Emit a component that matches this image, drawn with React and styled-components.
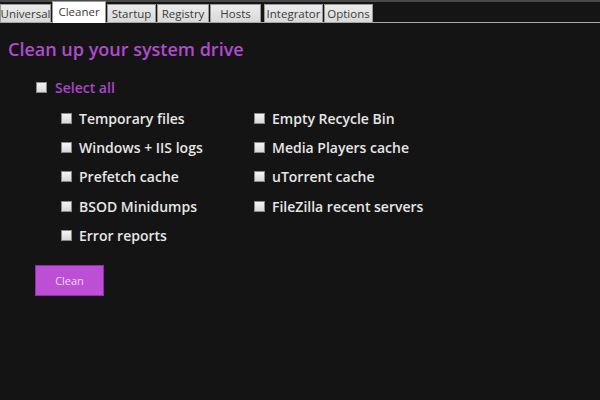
import React, { useState } from 'react';
import styled, { createGlobalStyle } from 'styled-components';

const Global = createGlobalStyle`
  html, body {
    margin: 0;
    padding: 0;
    background: #141414;
  }
  body {
    font-family: "Open Sans", "Noto Sans", sans-serif;
  }
`;

const Window = styled.div`
  width: 600px;
  height: 400px;
  background: #141414;
  overflow: hidden;
`;

const TabStrip = styled.div`
  height: 23px;
  display: flex;
  align-items: flex-end;
  background: #151515;
  border-top: 2px solid #4a4a4a;
  border-bottom: 1px solid #a8a8a8;
  box-sizing: border-box;
`;

const Tab = styled.div`
  height: ${p => (p.$active ? '22px' : '18px')};
  margin-right: ${p => p.$gap || 1}px;
  margin-bottom: ${p => (p.$active ? '-1px' : '0')};
  width: ${p => p.$w}px;
  box-sizing: border-box;
  display: flex;
  align-items: center;
  justify-content: center;
  font-size: 11.5px;
  color: #3a3a3a;
  background: ${p => (p.$active ? '#ffffff' : 'linear-gradient(#ececec, #d9d9d9)')};
  border: 1px solid #9a9a9a;
  border-bottom: none;
  padding-bottom: ${p => (p.$active ? '3px' : '0')};
  cursor: default;
`;

const Content = styled.div`
  padding: 13px 8px 6px;
`;

const Title = styled.h1`
  margin: 0;
  font-size: 18px;
  font-weight: 600;
  color: #b04ccc;
  line-height: 26px;
`;

const SelectAll = styled.label`
  display: flex;
  align-items: center;
  gap: 8px;
  margin: 15px 0 0 28px;
  font-size: 14px;
  font-weight: 600;
  color: #a845c8;
  height: 20px;
`;

const Columns = styled.div`
  display: grid;
  grid-template-columns: 193px 220px;
  margin: 7px 0 0 53px;
`;

const Column = styled.div`
  display: flex;
  flex-direction: column;
`;

const Item = styled.label`
  display: flex;
  align-items: center;
  gap: 7px;
  height: 29.2px;
  font-size: 14px;
  font-weight: 600;
  color: #e6e6e6;
`;

const Box = styled.span`
  width: 11px;
  height: 11px;
  box-sizing: border-box;
  background: ${p => (p.$on ? '#b04ccc' : 'linear-gradient(#f4f4f4, #d8d8d8)')};
  border: 1px solid #888;
  flex: none;
`;

const Button = styled.button`
  margin: 15px 0 0 27px;
  width: 69px;
  height: 31px;
  background: #bd4fd6;
  border: 1px solid #8e2fa8;
  color: #f0d8f6;
  font-family: inherit;
  font-size: 11px;
  cursor: pointer;
`;

const tabs = [
  ['Universal', 51],
  ['Cleaner', 54],
  ['Startup', 49],
  ['Registry', 52],
  ['Hosts', 51, 3],
  ['Integrator', 59],
  ['Options', 49],
];

const left = ['Temporary files', 'Windows + IIS logs', 'Prefetch cache', 'BSOD Minidumps', 'Error reports'];
const right = ['Empty Recycle Bin', 'Media Players cache', 'uTorrent cache', 'FileZilla recent servers'];

export default function App() {
  const [checked, setChecked] = useState({});
  const toggle = k => setChecked(c => ({ ...c, [k]: !c[k] }));

  return (
    <Window>
      <Global />
      <TabStrip>
        {tabs.map(([name, w, gap]) => (
          <Tab key={name} $w={w} $gap={gap} $active={name === 'Cleaner'}>{name}</Tab>
        ))}
      </TabStrip>
      <Content>
        <Title>Clean up your system drive</Title>
        <SelectAll onClick={() => toggle('all')}>
          <Box $on={checked.all} />
          Select all
        </SelectAll>
        <Columns>
          <Column>
            {left.map(t => (
              <Item key={t} onClick={() => toggle(t)}>
                <Box $on={checked[t]} />
                {t}
              </Item>
            ))}
          </Column>
          <Column>
            {right.map(t => (
              <Item key={t} onClick={() => toggle(t)}>
                <Box $on={checked[t]} />
                {t}
              </Item>
            ))}
          </Column>
        </Columns>
        <Button>Clean</Button>
      </Content>
    </Window>
  );
}
